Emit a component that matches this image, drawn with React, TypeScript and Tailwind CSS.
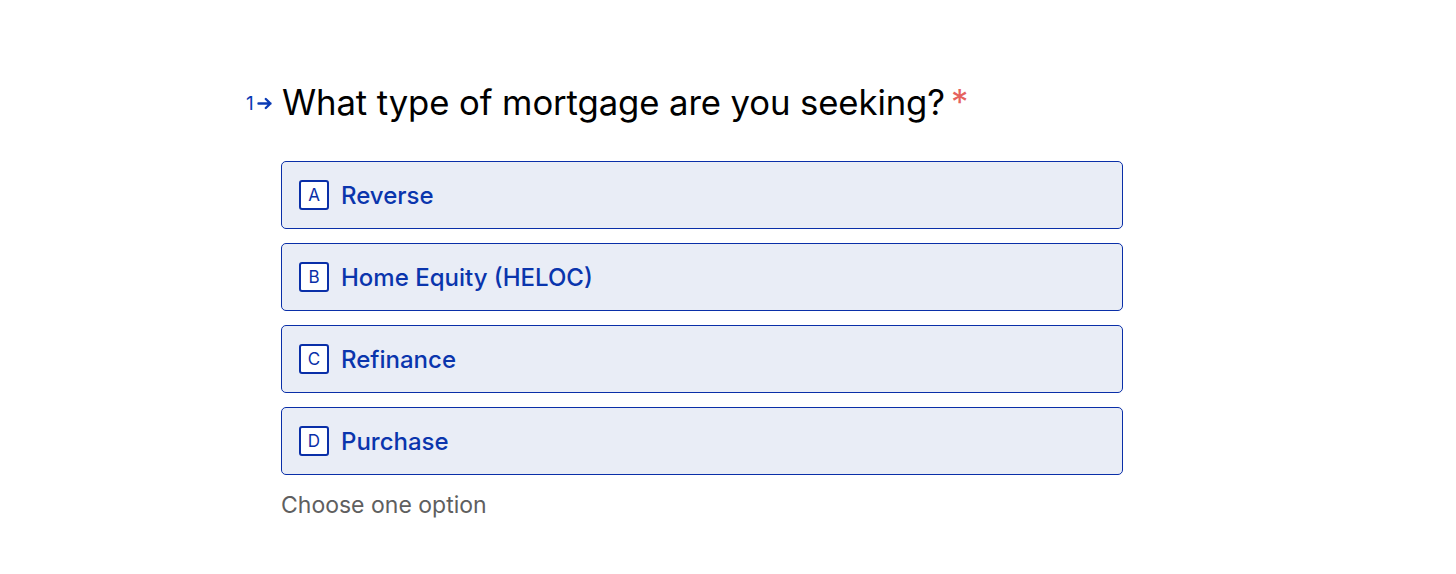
const options = [
  { key: "A", label: "Reverse" },
  { key: "B", label: "Home Equity (HELOC)" },
  { key: "C", label: "Refinance" },
  { key: "D", label: "Purchase" },
];

export default function App() {
  return (
    <div className="min-h-[574px] w-full bg-white font-['Inter',sans-serif]">
      <div className="ml-[246px] pt-[79px]">
        {/* Question */}
        <div className="flex items-center">
          <div className="mt-[3px] flex w-[36px] items-center text-[#0b3bb5]">
            <span className="text-[19px] leading-none">1</span>
            <svg width="16" height="15" viewBox="0 0 16 15" className="ml-[3px]">
              <path d="M1.5 7.5h12M8.8 3l4.6 4.5-4.6 4.5" fill="none" stroke="#0b3bb5" strokeWidth="2.4" strokeLinecap="round" strokeLinejoin="round" />
            </svg>
          </div>
          <h1 className="text-[34.7px] leading-[46px] tracking-[-0.1px] text-black">
            What type of mortgage are you seeking?
            <span className="ml-[6px] text-[#e5625e]">*</span>
          </h1>
        </div>

        {/* Options */}
        <div className="ml-[35px] mt-[36px] flex w-[842px] flex-col gap-[14px]">
          {options.map((o) => (
            <div
              key={o.key}
              className="flex h-[68px] items-center rounded-[5px] border-[1.5px] border-[#0a2fa8] bg-[#e9edf6] px-[17px]"
            >
              <div className="flex h-[30px] w-[30px] items-center justify-center rounded-[3px] border-2 border-[#0a2fa8] bg-white pt-[1px] text-[17px] text-[#0a2fa8]">
                {o.key}
              </div>
              <span className="ml-[12px] mt-[1px] text-[24px] font-medium text-[#0a35ad]">{o.label}</span>
            </div>
          ))}
        </div>

        <p className="ml-[35px] mt-[13px] text-[23px] text-[#5f5f5f]">Choose one option</p>
      </div>
    </div>
  );
}
